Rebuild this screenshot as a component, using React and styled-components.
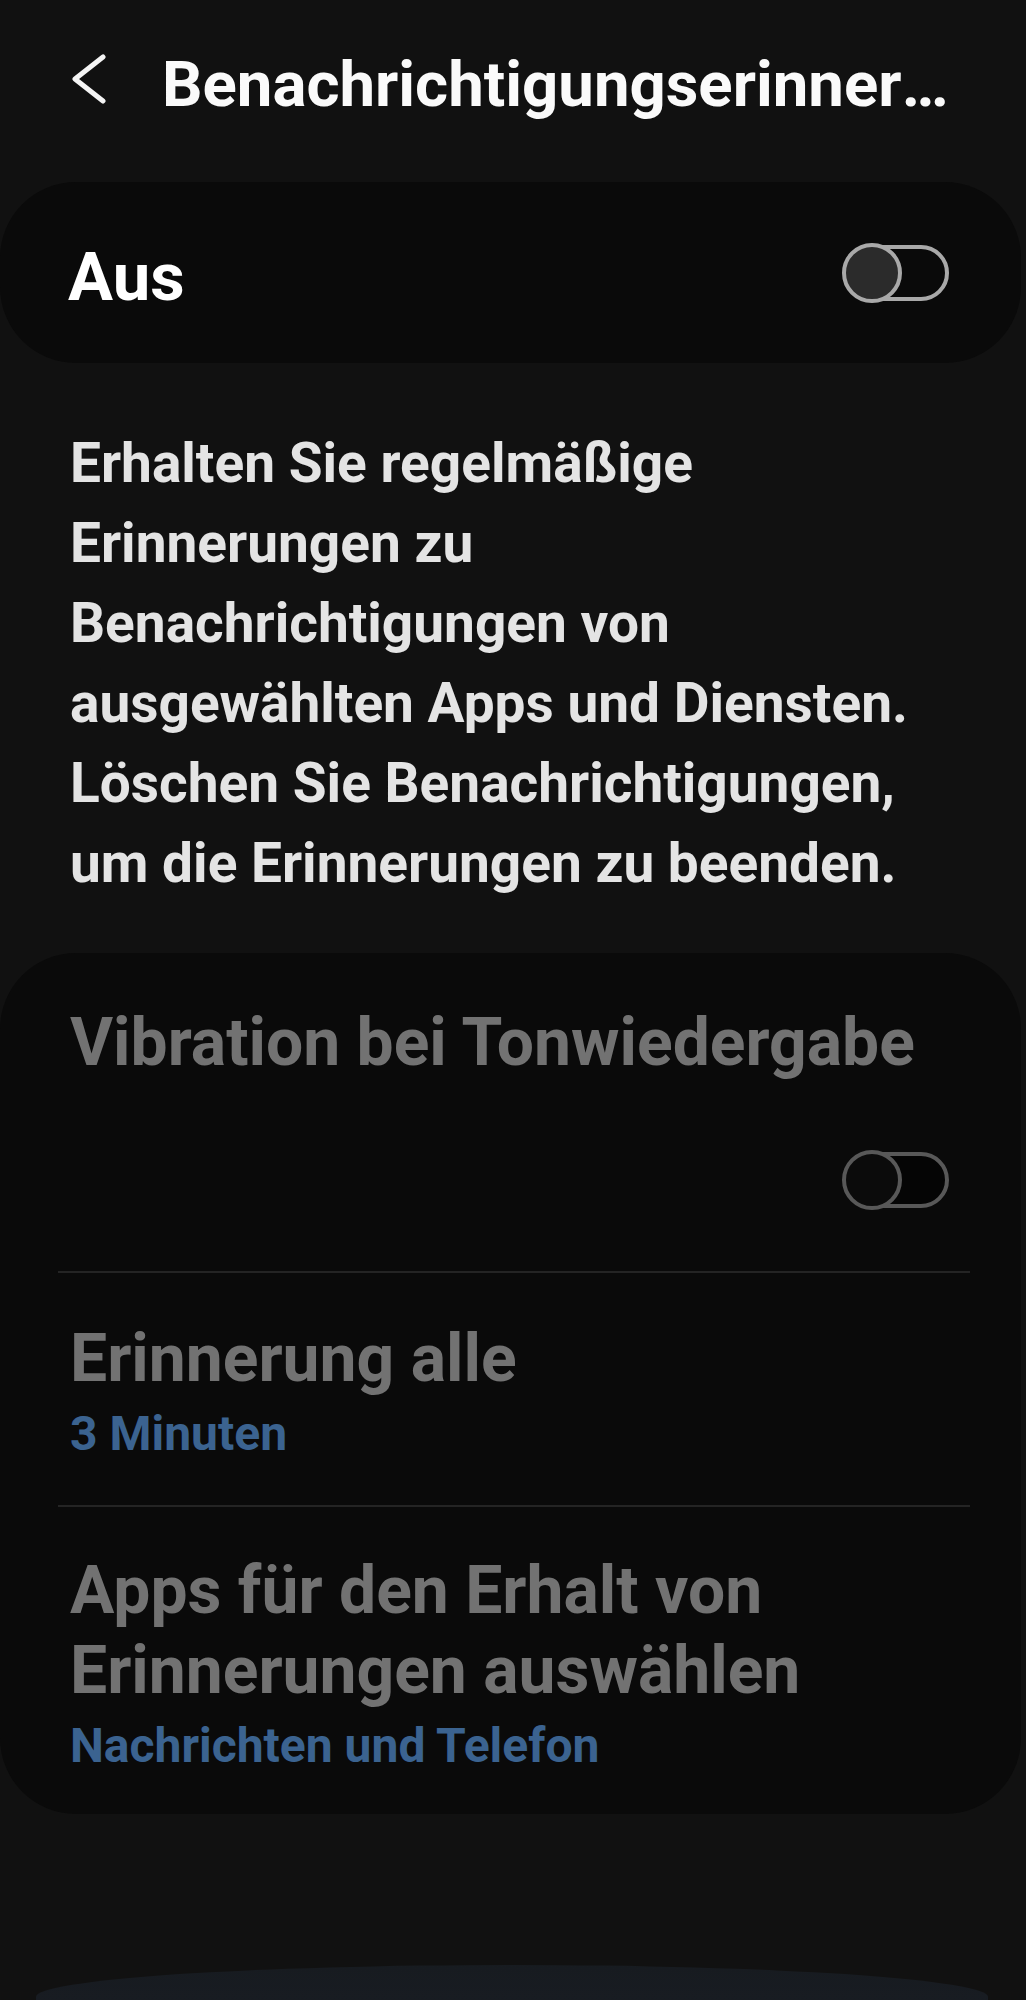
import React from 'react'
import styled, { createGlobalStyle } from 'styled-components'

const GlobalStyle = createGlobalStyle`
  html, body {
    margin: 0;
    padding: 0;
    background: #111111;
  }
  body {
    font-family: Roboto, "Noto Sans", "Liberation Sans", sans-serif;
    -webkit-font-smoothing: antialiased;
  }
`

const Screen = styled.div`
  height: 2000px;
  overflow: hidden;
  background: #111111;
  display: flex;
  flex-direction: column;
`

const Header = styled.div`
  display: flex;
  align-items: flex-start;
  padding: 47px 62px 0 72px;
  gap: 56px;
`

const BackButton = styled.button`
  background: none;
  border: none;
  padding: 0;
  margin-top: 6px;
  width: 34px;
  height: 52px;
  flex-shrink: 0;
  display: flex;
  cursor: pointer;
`

const Title = styled.h1`
  margin: 0;
  flex: 1;
  min-width: 0;
  font-size: 63.5px;
  line-height: 76px;
  font-weight: 700;
  color: #fafafa;
  white-space: nowrap;
  overflow: hidden;
  text-overflow: ellipsis;
`

const Card = styled.div`
  background: #0a0a0a;
  border-radius: 76px;
  margin: ${(p) => p.$top || 0}px 5px 0 0;
`

const MasterRow = styled.div`
  height: 181px;
  display: flex;
  align-items: center;
  justify-content: space-between;
  padding: 0 72px 0 68px;
`

const MasterLabel = styled.span`
  font-size: 67px;
  line-height: 80px;
  font-weight: 700;
  color: #ffffff;
  margin-top: 9px;
`

const SwitchWrap = styled.div`
  position: relative;
  width: 107px;
  height: 60px;
  flex-shrink: 0;
`

const Track = styled.div`
  position: absolute;
  top: 2px;
  bottom: 2px;
  left: 4px;
  right: 0;
  border-radius: 30px;
  border: 4px solid ${(p) => (p.$disabled ? '#585858' : '#a9a9a9')};
  background: ${(p) => (p.$disabled ? '#050505' : '#0a0a0a')};
`

const Thumb = styled.div`
  position: absolute;
  top: 0;
  left: 0;
  width: 60px;
  height: 60px;
  box-sizing: border-box;
  border-radius: 50%;
  border: 4px solid ${(p) => (p.$disabled ? '#585858' : '#a9a9a9')};
  background: ${(p) => (p.$disabled ? '#0b0b0b' : '#2b2b2b')};
`

const Description = styled.p`
  margin: 60px 0 0;
  padding: 0 90px 0 70px;
  font-size: 55px;
  line-height: 80px;
  font-weight: 700;
  color: #e4e4e4;
`

const Item = styled.div`
  padding: ${(p) => p.$pad || '45px 72px 0 70px'};
`

const ItemTitle = styled.div`
  font-size: 66px;
  line-height: 80px;
  font-weight: 700;
  color: #727272;
`

const ItemValue = styled.div`
  margin-top: 5px;
  font-size: 48px;
  line-height: 60px;
  font-weight: 700;
  color: #3b6390;
`

const SwitchLine = styled.div`
  display: flex;
  justify-content: flex-end;
  margin-top: 67px;
`

const Divider = styled.div`
  height: 2px;
  background: #242424;
  margin: ${(p) => p.$top || 0}px 51px 0 58px;
`

const BottomGlow = styled.div`
  margin: auto 38px 0 36px;
  height: 35px;
  border-radius: 476px 476px 0 0 / 32px 32px 0 0;
  background: linear-gradient(180deg, #171b20, #181c22);
`

const Chevron = () => (
  <svg width="34" height="52" viewBox="0 0 34 52" fill="none">
    <polyline
      points="31,4 3,26 31,48"
      stroke="#f5f5f5"
      strokeWidth="5"
      strokeLinecap="round"
      strokeLinejoin="round"
    />
  </svg>
)

const Switch = ({ disabled }) => (
  <SwitchWrap>
    <Track $disabled={disabled} />
    <Thumb $disabled={disabled} />
  </SwitchWrap>
)

const App = () => {
  return (
    <Screen>
      <GlobalStyle />
      <Header>
        <BackButton aria-label="Zurück">
          <Chevron />
        </BackButton>
        <Title>Benachrichtigungserinnerungen</Title>
      </Header>

      <Card $top={59}>
        <MasterRow>
          <MasterLabel>Aus</MasterLabel>
          <Switch />
        </MasterRow>
      </Card>

      <Description>
        Erhalten Sie regelmäßige Erinnerungen zu Benachrichtigungen von
        ausgewählten Apps und Diensten. Löschen Sie Benachrichtigungen, um die
        Erinnerungen zu beenden.
      </Description>

      <Card $top={50}>
        <Item $pad="50px 72px 0 70px">
          <ItemTitle>Vibration bei Tonwiedergabe</ItemTitle>
          <SwitchLine>
            <Switch disabled />
          </SwitchLine>
        </Item>
        <Divider $top={61} />
        <Item $pad="46px 72px 0 70px">
          <ItemTitle>Erinnerung alle</ItemTitle>
          <ItemValue>3 Minuten</ItemValue>
        </Item>
        <Divider $top={41} />
        <Item $pad="44px 72px 38px 70px">
          <ItemTitle>
            Apps für den Erhalt von Erinnerungen auswählen
          </ItemTitle>
          <ItemValue>Nachrichten und Telefon</ItemValue>
        </Item>
      </Card>

      <BottomGlow />
    </Screen>
  )
}

export default App
